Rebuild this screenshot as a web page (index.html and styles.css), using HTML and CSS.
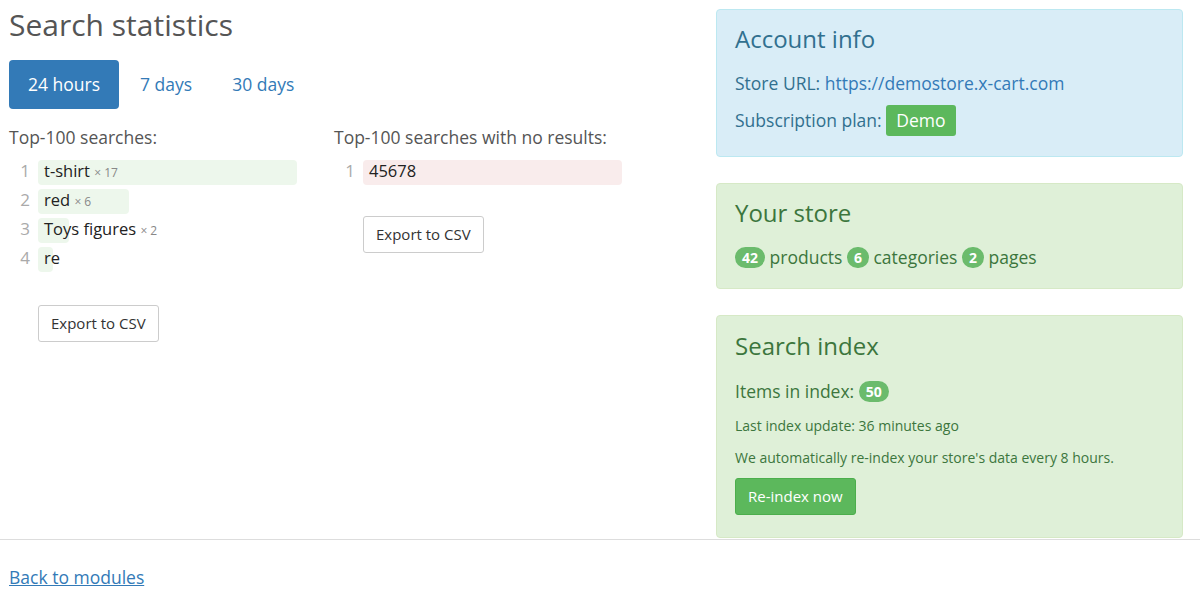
FILE: index.html
```html
<!DOCTYPE html>
<html lang="en">
<head>
    <meta charset="UTF-8">
    <title>Search statistics</title>
    <link rel="stylesheet" href="styles.css">
</head>
<body>
    <div class="page">
        <div class="main">
            <h1 class="title">Search statistics</h1>

            <ul class="pills">
                <li class="pill active"><a href="#">24 hours</a></li>
                <li class="pill"><a href="#">7 days</a></li>
                <li class="pill"><a href="#">30 days</a></li>
            </ul>

            <div class="stats">
                <div class="stats-col">
                    <div class="stats-label">Top-100 searches:</div>
                    <ol class="terms">
                        <li class="term">
                            <span class="num">1</span>
                            <span class="bar"><span class="fill" style="width: 100%"></span><span class="word">t-shirt <small>× 17</small></span></span>
                        </li>
                        <li class="term">
                            <span class="num">2</span>
                            <span class="bar"><span class="fill" style="width: 35.3%"></span><span class="word">red <small>× 6</small></span></span>
                        </li>
                        <li class="term">
                            <span class="num">3</span>
                            <span class="bar"><span class="fill" style="width: 11.8%"></span><span class="word">Toys figures <small>× 2</small></span></span>
                        </li>
                        <li class="term">
                            <span class="num">4</span>
                            <span class="bar"><span class="fill" style="width: 5.9%"></span><span class="word">re</span></span>
                        </li>
                    </ol>
                    <button class="btn-default">Export to CSV</button>
                </div>

                <div class="stats-col">
                    <div class="stats-label">Top-100 searches with no results:</div>
                    <ol class="terms">
                        <li class="term">
                            <span class="num">1</span>
                            <span class="bar"><span class="fill fill-empty" style="width: 100%"></span><span class="word">45678</span></span>
                        </li>
                    </ol>
                    <button class="btn-default btn-short">Export to CSV</button>
                </div>
            </div>
        </div>

        <div class="side">
            <div class="alert alert-info">
                <h3>Account info</h3>
                <p>Store URL: <a href="#">https://demostore.x-cart.com</a></p>
                <p class="last">Subscription plan: <span class="label">Demo</span></p>
            </div>

            <div class="alert alert-success">
                <h3>Your store</h3>
                <p class="last"><span class="badge">42</span> products <span class="badge">6</span> categories <span class="badge">2</span> pages</p>
            </div>

            <div class="alert alert-success alert-index">
                <h3>Search index</h3>
                <p>Items in index: <span class="badge">50</span></p>
                <p class="small">Last index update: 36 minutes ago</p>
                <p class="small">We automatically re-index your store's data every 8 hours.</p>
                <button class="btn-success">Re-index now</button>
            </div>
        </div>
    </div>

    <div class="footer">
        <a href="#">Back to modules</a>
    </div>
</body>
</html>
```

FILE: styles.css
```css
html, body {
    margin: 0;
    padding: 0;
}

body {
    font-family: "Open Sans", Arial, sans-serif;
    font-size: 17.5px;
    color: #333;
    background: #fff;
}

a {
    color: #337ab7;
    text-decoration: none;
}

.page {
    display: grid;
    grid-template-columns: 1fr 467px;
    padding: 9px 17px 0 9px;
}

.title {
    font-size: 30px;
    font-weight: normal;
    line-height: 32px;
    color: #555;
    margin: 0 0 19px;
}

.pills {
    list-style: none;
    margin: 0;
    padding: 0;
    display: flex;
}

.pill {
    margin-left: 2px;
}

.pill:first-child {
    margin-left: 0;
}

.pill a {
    display: block;
    padding: 12px 19px;
    line-height: 25px;
    border-radius: 4px;
}

.pill.active a {
    background: #337ab7;
    color: #fff;
}

.stats {
    display: flex;
    margin-top: 15px;
}

.stats-col {
    width: 325px;
}

.stats-label {
    line-height: 26px;
    color: #555;
    margin-bottom: 10px;
}

.terms {
    list-style: none;
    margin: 0;
    padding: 0;
}

.term {
    display: flex;
    height: 25px;
    margin-bottom: 4px;
}

.num {
    width: 21px;
    margin-right: 8px;
    text-align: right;
    color: #aaa;
    line-height: 21px;
    font-size: 17px;
}

.bar {
    position: relative;
    width: 259px;
    height: 25px;
    line-height: 21px;
}

.fill {
    position: absolute;
    left: 0;
    top: 0;
    bottom: 0;
    background: #edf7ec;
    border-radius: 4px;
}

.fill-empty {
    background: #f9ecec;
}

.word {
    position: relative;
    padding-left: 6px;
    font-size: 16.5px;
    line-height: 21px;
    color: #222;
    white-space: nowrap;
}

.word small {
    font-size: 12px;
    color: #888;
}

.btn-default {
    box-sizing: border-box;
    height: 37px;
    margin: 29px 0 0 29px;
    font-family: inherit;
    font-size: 15px;
    line-height: 23px;
    padding: 6px 12px;
    color: #333;
    background: #fff;
    border: 1px solid #ccc;
    border-radius: 3px;
}

.btn-short {
    margin-top: 27px;
}

.alert {
    border: 1px solid;
    border-radius: 4px;
    padding: 14px 18px 17px;
    margin-bottom: 26px;
}

.alert:last-child {
    margin-bottom: 0;
}

.alert h3 {
    font-size: 24px;
    font-weight: normal;
    line-height: 30px;
    margin: 0 0 16px;
}

.alert p {
    margin: 0 0 9px;
    line-height: 26px;
}

.alert p.last {
    margin-bottom: 1px;
}

.alert-info p.last {
    margin-bottom: 3px;
}

.alert p.small {
    font-size: 14px;
    line-height: 20px;
    margin-bottom: 12px;
}

.alert-index {
    padding-top: 15px;
    padding-bottom: 22px;
}

.alert-index h3 {
    margin-bottom: 17px;
}

.alert-index p {
    margin-bottom: 12px;
}

.alert-info {
    background: #d9edf7;
    border-color: #bce8f1;
    color: #31708f;
}

.alert-success {
    background: #dff0d8;
    border-color: #d6e9c6;
    color: #3c763d;
}

.label {
    display: inline-block;
    background: #5cb85c;
    color: #fff;
    padding: 2px 10px;
    border-radius: 3px;
    line-height: 27px;
}

.badge {
    display: inline-block;
    background: #6bbb6c;
    color: #fff;
    font-size: 14px;
    font-weight: bold;
    line-height: 21px;
    padding: 0 7px;
    border-radius: 11px;
    vertical-align: 1px;
}

.btn-success {
    box-sizing: border-box;
    height: 37px;
    font-family: inherit;
    font-size: 15px;
    line-height: 23px;
    padding: 6px 12px;
    color: #fff;
    background: #5cb85c;
    border: 1px solid #4cae4c;
    border-radius: 3px;
    margin-top: -2px;
}

.footer {
    margin-top: 1px;
    border-top: 1px solid #ddd;
    padding: 24px 9px 10px;
}

.footer a {
    text-decoration: underline;
    line-height: 26px;
}
```
